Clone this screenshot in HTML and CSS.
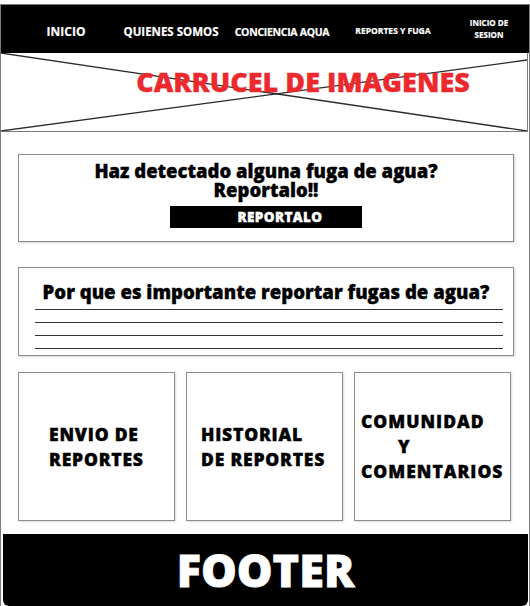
FILE: index.html
```html
<!DOCTYPE html>
<html lang="es">
<head>
  <meta charset="UTF-8">
  <meta name="viewport" content="width=device-width, initial-scale=1.0">
  <title>Conciencia Aqua</title>
  <link rel="stylesheet" href="styles.css">
</head>
<body>
  <div class="pagina">
    <header class="menu">
      <a class="menu-item m1">INICIO</a>
      <a class="menu-item m2">QUIENES SOMOS</a>
      <a class="menu-item m3">CONCIENCIA AQUA</a>
      <a class="menu-item m4">REPORTES Y FUGA</a>
      <a class="menu-item m5">INICIO DE<br>SESION</a>
    </header>

    <section class="carrusel">
      <svg class="carrusel-x" viewBox="0 0 526 78" preserveAspectRatio="none">
        <line x1="0" y1="0" x2="526" y2="78" />
        <line x1="0" y1="78" x2="526" y2="7" />
      </svg>
      <h2 class="carrusel-titulo">CARRUCEL DE IMAGENES</h2>
    </section>

    <main class="contenido">
      <div class="caja reporte">
        <h3>Haz detectado alguna fuga de agua?<br>Reportalo!!</h3>
        <button class="btn-reportar">REPORTALO</button>
      </div>

      <div class="caja importancia">
        <h3>Por que es importante reportar fugas de agua?</h3>
        <div class="renglon"></div>
        <div class="renglon"></div>
        <div class="renglon"></div>
        <div class="renglon"></div>
      </div>

      <div class="tarjetas">
        <div class="tarjeta t1"><p>ENVIO DE<br>REPORTES</p></div>
        <div class="tarjeta t2"><p>HISTORIAL<br>DE REPORTES</p></div>
        <div class="tarjeta t3"><p>COMUNIDAD<br><span class="y">Y</span><br>COMENTARIOS</p></div>
      </div>
    </main>

    <footer class="pie">FOOTER</footer>
  </div>
</body>
</html>
```

FILE: styles.css
```css
body {
  margin: 0;
  background: #fff;
  font-family: "Open Sans", Arial, sans-serif;
}
.pagina {
  box-sizing: border-box;
  width: 530px;
  height: 602px;
  margin-top: 4px;
  border: 1px solid #7a7a7a;
  border-bottom: none;
  display: flex;
  flex-direction: column;
}
.menu {
  box-sizing: border-box;
  height: 48px;
  background: #000;
  color: #fff;
  display: grid;
  grid-template-columns: 106px 104px 118px 104px 1fr;
  align-items: center;
  padding: 5px 0 0 12px;
}
.menu-item {
  text-align: center;
  font-weight: 700;
  white-space: nowrap;
  -webkit-text-stroke: 0.2px #fff;
}
.m1 { font-size: 12px; }
.m2 { font-size: 11.5px; }
.m3 { font-size: 10.5px; letter-spacing: -0.3px; }
.m4 { font-size: 8.5px; margin-top: -3px; }
.m5 { font-size: 8px; line-height: 12px; padding-left: 4px; margin-top: -6px; }

.carrusel {
  position: relative;
  height: 78px;
  width: 526px;
  border-right: 1px solid #7a7a7a;
  border-bottom: 1px solid #7a7a7a;
}
.carrusel-x {
  position: absolute;
  left: 0;
  top: 0;
  width: 100%;
  height: 100%;
}
.carrusel-x line {
  stroke: #2b2b2b;
  stroke-width: 1.3;
}
.carrusel-titulo {
  position: relative;
  margin: 0;
  padding: 11px 0 0 78px;
  text-align: center;
  color: #ec2a2e;
  font-size: 27px;
  font-weight: 800;
  line-height: 36px;
  -webkit-text-stroke: 0.3px #ec2a2e;
}

.contenido {
  padding: 22px 0 0 17px;
}
.caja {
  box-sizing: border-box;
  width: 496px;
  border: 1px solid #8c8c8c;
  box-shadow: 1px 1px 2px rgba(0, 0, 0, 0.18);
  text-align: center;
}
.caja h3 {
  margin: 0;
  font-weight: 800;
  -webkit-text-stroke: 0.35px #000;
}
.reporte {
  height: 88px;
  padding-top: 7px;
}
.reporte h3 {
  font-size: 18.5px;
  line-height: 18.5px;
}
.btn-reportar {
  display: block;
  margin: 7px auto 0;
  width: 192px;
  height: 22px;
  border: none;
  background: #000;
  color: #fff;
  font-family: inherit;
  font-size: 13.5px;
  font-weight: 800;
  letter-spacing: 0.4px;
  padding: 0 0 0 28px;
  -webkit-text-stroke: 0.4px #fff;
}
.importancia {
  margin-top: 25px;
  height: 89px;
  padding: 12px 10px 0 12px;
}
.importancia h3 {
  font-size: 18.6px;
  line-height: 24px;
  margin: 0 -6px 5px -8px;
}
.renglon {
  height: 12px;
  border-top: 1px solid #333;
  margin-left: 4px;
}

.tarjetas {
  margin-top: 16px;
  display: grid;
  grid-template-columns: repeat(3, 157px);
  gap: 11px;
}
.tarjeta {
  box-sizing: border-box;
  height: 149px;
  border: 1px solid #8c8c8c;
  box-shadow: 1px 1px 2px rgba(0, 0, 0, 0.15);
  display: flex;
  align-items: center;
}
.tarjeta p {
  margin: 0;
  font-size: 17.5px;
  font-weight: 800;
  line-height: 25px;
  letter-spacing: 0.8px;
  white-space: nowrap;
  -webkit-text-stroke: 0.4px #000;
}
.t1 { padding-left: 30px; }
.t2 { padding-left: 14px; }
.t3 { padding-left: 6px; }
.t3 p { letter-spacing: 1px; }
.y { padding-left: 37px; }

.pie {
  margin: 13px 1px 0 2px;
  flex: 1;
  background: #000;
  color: #fff;
  border-radius: 0 0 6px 6px;
  text-align: center;
  font-size: 45px;
  font-weight: 800;
  line-height: 72px;
  -webkit-text-stroke: 0.8px #fff;
}
```
